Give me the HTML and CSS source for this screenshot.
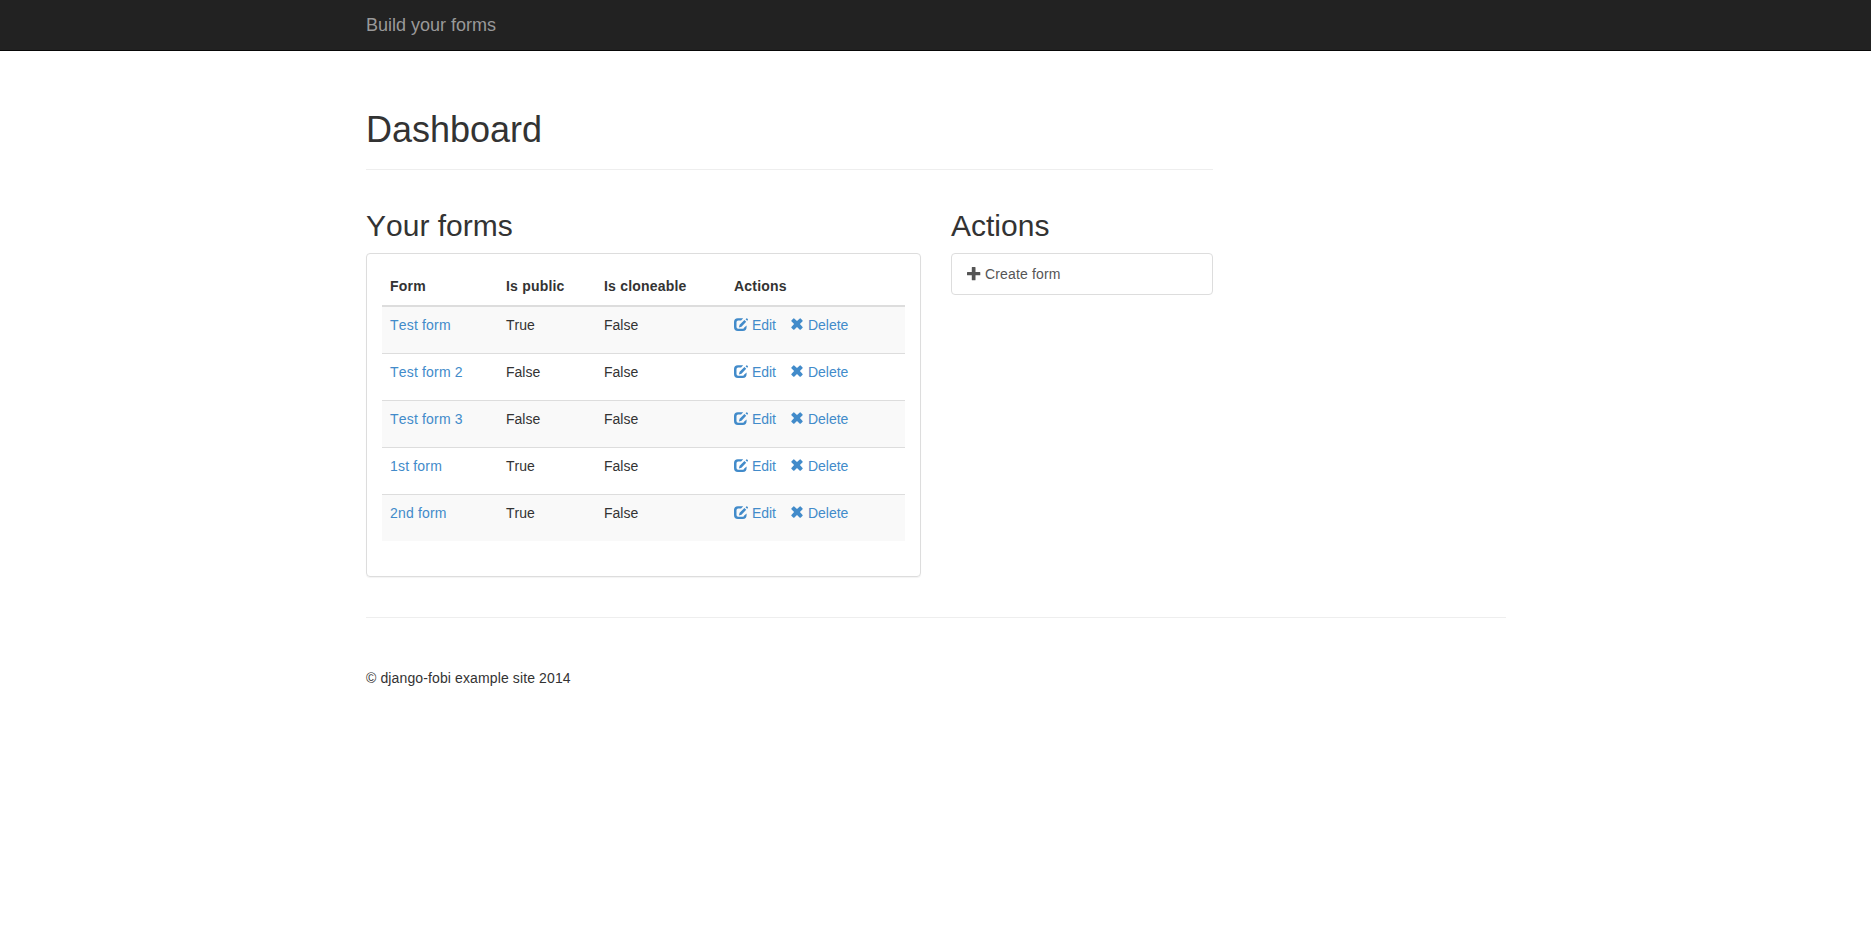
FILE: index.html
```html
<!DOCTYPE html>
<html lang="en">
<head>
<meta charset="utf-8">
<title>Dashboard</title>
<link rel="stylesheet" href="styles.css">
</head>
<body>
<svg width="0" height="0" class="sprites" aria-hidden="true">
  <symbol id="edit" viewBox="0 0 14 14"><path d="M9.2.2H3.9Q0 .2 0 4.1v5Q0 13 3.9 13h4.9q3.8 0 3.8-3.9V7.4L10.2 9.5q-.2 1.3-1.6 1.3H4.2q-1.7 0-1.7-1.7V4.2q0-1.7 1.7-1.7h2.9zM4.9 9.5l.7-2.7L10.4 2l1.8 1.8-4.7 4.9zM11.9.9q.6-.9 1.3-.4l.6.6q.5.6-.3 1.3l-.4.3-1.6-1.4z"/></symbol>
  <symbol id="remove" viewBox="0 0 14 14"><path d="M4.2.4 7 3.1 9.8.4q.4-.3.8 0l2 2q.3.4 0 .8L9.9 6.1l2.7 2.8q.3.4 0 .8l-2 2q-.4.3-.8 0L7 9l-2.8 2.7q-.4.3-.8 0l-2-2q-.3-.4 0-.8l2.7-2.8-2.7-2.9q-.3-.4 0-.8l2-2q.4-.3.8 0z"/></symbol>
  <symbol id="plus" viewBox="0 0 14 14"><path d="M5.3 0H8q.5 0 .5.5V5h4.3q.5 0 .5.5v2.3q0 .5-.5.5H8.5v4.4q0 .5-.5.5H5.3q-.5 0-.5-.5V8.3H.5Q0 8.3 0 7.8V5.5Q0 5 .5 5h4.3V.5q0-.5.5-.5z"/></symbol>
</svg>
<nav class="navbar"><div class="container"><a class="brand">Build your forms</a></div></nav>
<main class="container">
  <div class="content">
    <h1>Dashboard</h1>
    <div class="columns">
      <section class="forms">
        <h2>Your forms</h2>
        <div class="panel">
          <table>
            <thead><tr><th class="c-form">Form</th><th class="c-public">Is public</th><th class="c-clone">Is cloneable</th><th>Actions</th></tr></thead>
            <tbody>
              <tr><td><a class="name">Test form</a></td><td>True</td><td>False</td><td><a class="action"><svg class="icon"><use href="#edit"/></svg> Edit</a><a class="action"><svg class="icon"><use href="#remove"/></svg> Delete</a></td></tr>
              <tr><td><a class="name">Test form 2</a></td><td>False</td><td>False</td><td><a class="action"><svg class="icon"><use href="#edit"/></svg> Edit</a><a class="action"><svg class="icon"><use href="#remove"/></svg> Delete</a></td></tr>
              <tr><td><a class="name">Test form 3</a></td><td>False</td><td>False</td><td><a class="action"><svg class="icon"><use href="#edit"/></svg> Edit</a><a class="action"><svg class="icon"><use href="#remove"/></svg> Delete</a></td></tr>
              <tr><td><a class="name">1st form</a></td><td>True</td><td>False</td><td><a class="action"><svg class="icon"><use href="#edit"/></svg> Edit</a><a class="action"><svg class="icon"><use href="#remove"/></svg> Delete</a></td></tr>
              <tr><td><a class="name">2nd form</a></td><td>True</td><td>False</td><td><a class="action"><svg class="icon"><use href="#edit"/></svg> Edit</a><a class="action"><svg class="icon"><use href="#remove"/></svg> Delete</a></td></tr>
            </tbody>
          </table>
        </div>
      </section>
      <aside class="side">
        <h2>Actions</h2>
        <a class="list-item"><svg class="icon"><use href="#plus"/></svg> Create form</a>
      </aside>
    </div>
  </div>
  <footer>© django-fobi example site 2014</footer>
</main>
</body>
</html>
```
FILE: styles.css
```css
* { box-sizing: border-box; }
body {
  margin: 0;
  font: 14px/20px "Liberation Sans", Arial, sans-serif;
  font-kerning: none;
  color: #333;
  background: #fff;
}
.sprites { position: absolute; }
.container { width: 1169px; margin: 0 auto; padding: 0 14px 0 15px; }
.navbar { height: 51px; background: #222; border-bottom: 1px solid #080808; }
.brand { display: block; padding-top: 15px; font-size: 18px; }
.content { width: 847px; padding-top: 59px; }
h1, h2 { margin: 0; font-weight: 500; line-height: 1.1; }
h1 { height: 60px; font-size: 36px; border-bottom: 1px solid #eee; }
.columns { display: flex; gap: 30px; align-items: flex-start; padding-top: 39px; }
h2 { height: 33px; margin-bottom: 11px; font-size: 30px; }
.forms { width: 555px; }
.side { flex: 1; }
.panel {
  height: 324px;
  padding: 15px;
  border: 1px solid #ddd;
  border-radius: 4px;
  box-shadow: 0 1px 1px rgba(0, 0, 0, .05);
}
table { width: 100%; table-layout: fixed; border-collapse: separate; border-spacing: 0; }
th, td { padding: 8px; text-align: left; vertical-align: top; }
th { height: 38px; padding-top: 7px; letter-spacing: .2px; border-bottom: 2px solid #ddd; }
td { height: 47px; border-top: 1px solid #ddd; }
tbody tr:first-child td { height: 46px; border-top: 0; }
tbody tr:nth-child(odd) { background: #f9f9f9; }
.c-form { width: 116px; }
.c-public { width: 98px; }
.c-clone { width: 130px; }
a { color: #428bca; text-decoration: none; }
a.brand { color: #999; }
.name { letter-spacing: .18px; }
.action { margin-right: 14px; }
.icon { display: inline-block; width: 14px; height: 14px; vertical-align: -2px; fill: currentColor; overflow: visible; }
.list-item {
  display: block;
  height: 42px;
  padding: 10px 15px;
  border: 1px solid #ddd;
  border-radius: 4px;
  color: #555;
  letter-spacing: .14px;
}
footer { margin-top: 40px; padding-top: 50px; border-top: 1px solid #eee; letter-spacing: .12px; }
```
